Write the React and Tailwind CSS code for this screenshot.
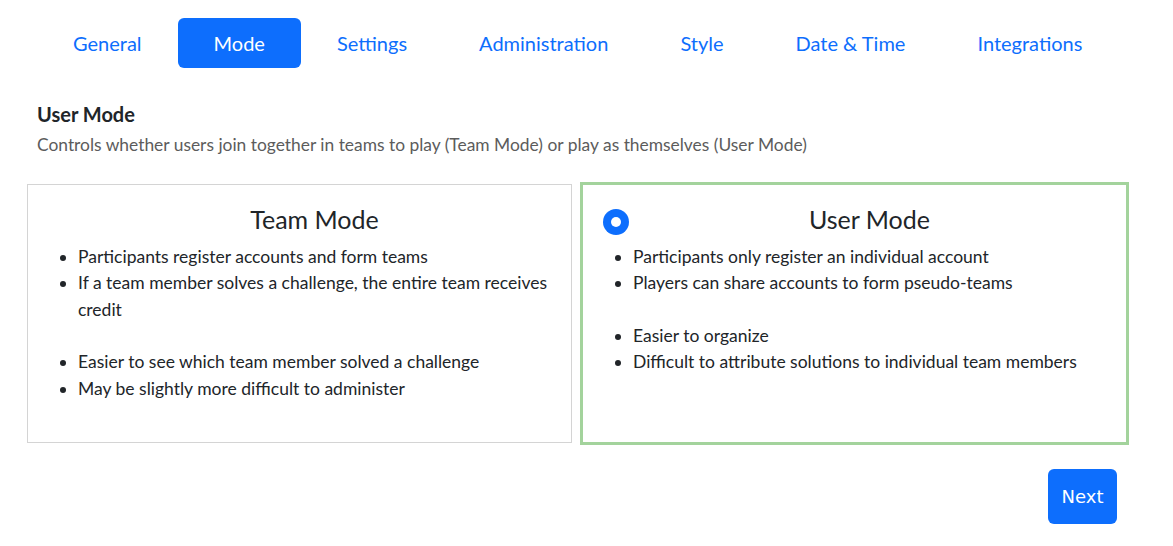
const tabs = ['General', 'Mode', 'Settings', 'Administration', 'Style', 'Date & Time', 'Integrations'];

function ModeCard({ title, items, selected }) {
  return (
    <div
      className={
        'relative ' +
        (selected ? 'border-[3px] border-[#a3d39c] pt-[17px]' : 'border border-[#d4d4d4] my-[2px] pt-[17px]')
      }
    >
      {selected && (
        <span className="absolute left-[20px] top-[24px] w-[26px] h-[26px] rounded-full bg-[#0d6efd] flex items-center justify-center">
          <span className="w-[10px] h-[10px] rounded-full bg-white" />
        </span>
      )}
      <h3 className="text-center text-[25px] leading-[34px] text-[#212529] pl-[30px]">
        {title}
      </h3>
      <ul className="list-disc pl-[50px] pr-6 text-[17.5px] leading-[26.4px] text-[#212529] mt-[8px]">
        {items.map((it, i) =>
          it ? <li key={i}>{it}</li> : <li key={i} className="list-none h-[26px]" />
        )}
      </ul>
    </div>
  );
}

export default function App() {
  return (
    <div className="min-h-[546px] bg-white" style={{ fontFamily: 'Lato, "Open Sans", sans-serif' }}>
      <div className="ml-[27px] w-[1102px] pt-[18px]">
        <nav className="flex pl-[10px]">
          {tabs.map((t) => (
            <a
              key={t}
              href="#"
              className={
                'px-[36px] h-[50px] flex items-center text-[20px] rounded-[6px] ' +
                (t === 'Mode' ? 'bg-[#0d6efd] text-white' : 'text-[#0d6efd]')
              }
            >
              {t}
            </a>
          ))}
        </nav>

        <div className="px-[10px] mt-[32px]">
          <h2 className="text-[20px] font-bold leading-[28px] text-[#212529]">User Mode</h2>
          <p className="text-[17.4px] leading-[26px] text-[#5c5c5c] mt-[4px]">
            Controls whether users join together in teams to play (Team Mode) or play as themselves (User Mode)
          </p>
        </div>

        <div className="grid grid-cols-[545px_549px] gap-[8px] mt-[24px] h-[263px]">
          <ModeCard
            title="Team Mode"
            items={[
              'Participants register accounts and form teams',
              'If a team member solves a challenge, the entire team receives credit',
              '',
              'Easier to see which team member solved a challenge',
              'May be slightly more difficult to administer',
            ]}
          />
          <ModeCard
            selected
            title="User Mode"
            items={[
              'Participants only register an individual account',
              'Players can share accounts to form pseudo-teams',
              '',
              'Easier to organize',
              'Difficult to attribute solutions to individual team members',
            ]}
          />
        </div>

        <div className="flex justify-end mt-[24px] pr-[12px]">
          <button
            className="w-[69px] h-[55px] rounded-[6px] bg-[#0d6efd] text-white text-[18px]"
            style={{ fontFamily: '"DejaVu Sans", sans-serif' }}
          >
            Next
          </button>
        </div>
      </div>
    </div>
  );
}
